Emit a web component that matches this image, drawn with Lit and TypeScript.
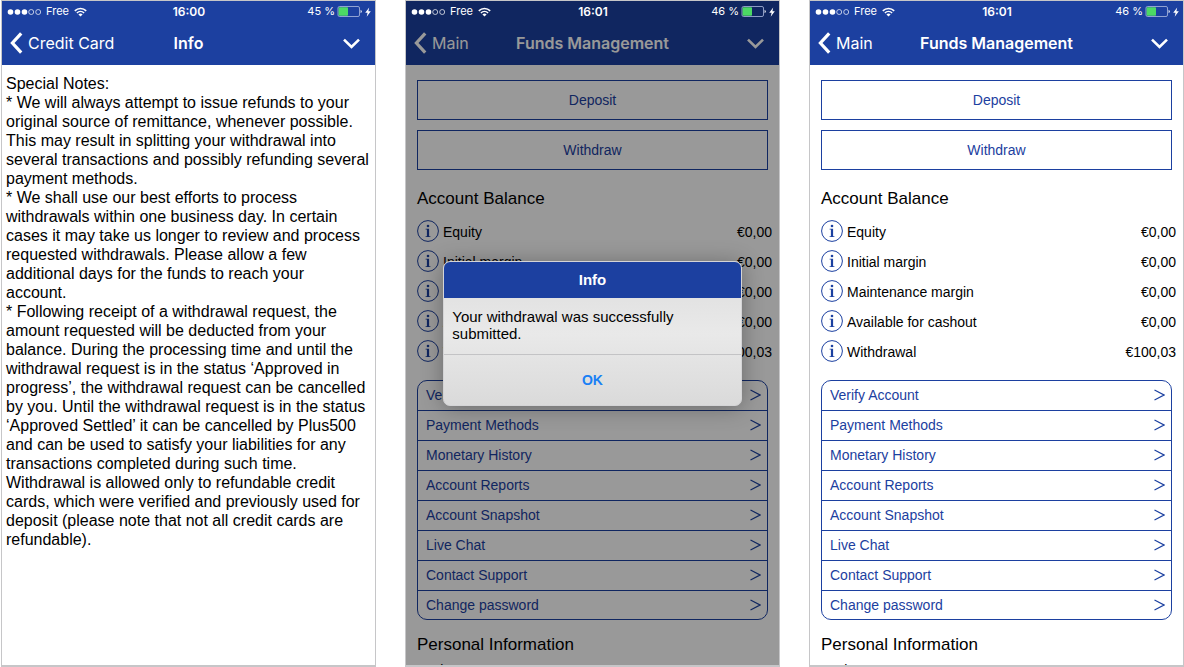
import { LitElement, html, css, nothing } from "lit";
import { customElement, property, state } from "lit/decorators.js";

/** iOS-style phone frame: status bar, navigation bar, content and an optional dialog layer. */
@customElement("phone-frame")
class PhoneFrame extends LitElement {
  @property() time = "";
  @property() battery = "";
  @property() back = "";
  @property() heading = "";
  @property({ type: Boolean }) dimmed = false;

  static styles = css`
    :host {
      position: relative;
      display: flex;
      flex-direction: column;
      min-width: 0;
      min-height: 0;
      box-sizing: border-box;
      border: 1px solid #c6c6c8;
      border-bottom-width: 2px;
      background: #fff;
      overflow: hidden;
    }
    * {
      box-sizing: border-box;
    }
    .top {
      flex: none;
      background: #1c40a0;
      color: #fff;
      font-family: Inter, "Liberation Sans", sans-serif;
    }
    .status {
      position: relative;
      z-index: 2;
      display: grid;
      grid-template-columns: 1fr auto 1fr;
      align-items: center;
      height: 21px;
      padding: 0 4px 0 5px;
      font-size: 11px;
      line-height: 21px;
    }
    .side {
      display: flex;
      align-items: center;
      gap: 5px;
    }
    .end {
      justify-content: flex-end;
      gap: 2px;
    }
    .clock {
      font-size: 12px;
      font-weight: 600;
    }
    .nav {
      display: grid;
      grid-template-columns: 1fr auto 1fr;
      align-items: center;
      height: 43px;
      padding: 0 7px 1px;
    }
    .nav button {
      display: flex;
      align-items: center;
      gap: 5px;
      padding: 0;
      border: 0;
      background: none;
      color: inherit;
      font: 400 16px/24px Inter, "Liberation Sans", sans-serif;
      cursor: pointer;
    }
    .nav .more {
      justify-self: end;
      padding: 0 8px;
    }
    h1 {
      margin: 0;
      font-size: 16px;
      line-height: 24px;
      font-weight: 600;
    }
    .content {
      flex: 1;
      min-height: 0;
      overflow: hidden;
    }
    .overlay {
      position: absolute;
      inset: 0;
      z-index: 1;
      display: flex;
      align-items: center;
      justify-content: center;
      background: rgba(0, 0, 0, 0.4);
    }
  `;

  render() {
    return html`
      <header class="top">
        <div class="status">
          <div class="side">
            <svg width="34" height="8" viewBox="0 0 34 8" aria-hidden="true">
              <g fill="#fff">
                <circle cx="3.5" cy="4" r="2.8" /><circle cx="10.5" cy="4" r="2.8" /><circle cx="17.5" cy="4" r="2.8" />
              </g>
              <g fill="none" stroke="#fff" stroke-width="0.7">
                <circle cx="24.2" cy="4" r="2.5" /><circle cx="31.2" cy="4" r="2.5" />
              </g>
            </svg>
            <span>Free</span>
            <svg width="13" height="10" viewBox="0 0 13 10" aria-hidden="true">
              <g fill="none" stroke="#fff" stroke-width="1.6">
                <path d="M0.8 3.8 A8.2 8.2 0 0 1 12.2 3.8" />
                <path d="M2.9 6 A5.2 5.2 0 0 1 10.1 6" />
              </g>
              <path d="M6.5 9.6 L4.4 7.5 A3 3 0 0 1 8.6 7.5 Z" fill="#fff" />
            </svg>
          </div>
          <span class="clock">${this.time}</span>
          <div class="side end">
            <span>${this.battery} %</span>
            <svg width="26" height="11" viewBox="0 0 26 11" aria-hidden="true">
              <rect x="1" y="0.5" width="21.5" height="10" rx="1.5" fill="none" stroke="#aebbe0" stroke-width="0.8" />
              <rect x="1.6" y="1.2" width="9.4" height="8.6" rx="0.8" fill="#4cd964" />
              <path d="M23.6 3.7 A2 2 0 0 1 23.6 7.3 Z" fill="#fff" />
            </svg>
            <svg width="6" height="10" viewBox="0 0 6 10" aria-hidden="true">
              <path d="M4.2 0.5 L0.2 5.8 H2.6 L1.7 9.8 L5.8 4.3 H3.4 Z" fill="#fff" />
            </svg>
          </div>
        </div>
        <nav class="nav">
          <button type="button">
            <svg width="14" height="22" viewBox="0 0 14 22" aria-hidden="true">
              <path d="M12.2 1.4 L3.4 11 L12.2 20.6" fill="none" stroke="currentColor" stroke-width="3.2" />
            </svg>
            <span>${this.back}</span>
          </button>
          <h1>${this.heading}</h1>
          <button class="more" type="button" aria-label="More">
            <svg width="17" height="11" viewBox="0 0 17 11" aria-hidden="true">
              <path d="M1 1.6 L8.5 9 L16 1.6" fill="none" stroke="currentColor" stroke-width="2.6" />
            </svg>
          </button>
        </nav>
      </header>
      <main class="content"><slot></slot></main>
      ${this.dimmed ? html`<div class="overlay"><slot name="dialog"></slot></div>` : nothing}
    `;
  }
}

const balances = [
  ["Equity", "€0,00"],
  ["Initial margin", "€0,00"],
  ["Maintenance margin", "€0,00"],
  ["Available for cashout", "€0,00"],
  ["Withdrawal", "€100,03"],
];

const links = [
  "Verify Account",
  "Payment Methods",
  "Monetary History",
  "Account Reports",
  "Account Snapshot",
  "Live Chat",
  "Contact Support",
  "Change password",
];

@customElement("funds-page")
class FundsPage extends LitElement {
  static styles = css`
    :host {
      display: block;
      padding: 15px 11px 0;
      color: #000;
      font: 14px/20px "Liberation Sans", Arial, sans-serif;
    }
    * {
      box-sizing: border-box;
    }
    .actions {
      display: grid;
      gap: 10px;
    }
    .action {
      height: 40px;
      border: 1px solid #1c40a0;
      background: none;
      color: #1c40a0;
      font: inherit;
      cursor: pointer;
    }
    h2 {
      margin: 0;
      font-size: 17px;
      line-height: 20px;
      font-weight: 400;
    }
    .balances {
      margin: 19px 0 0;
    }
    .rows {
      margin: 7px -4px 14px 0;
    }
    .row {
      display: flex;
      align-items: center;
      height: 30px;
    }
    .info {
      display: flex;
      margin-right: 4px;
      padding: 0;
      border: 0;
      background: none;
      cursor: pointer;
    }
    dt,
    dd {
      margin: 0;
      padding-top: 2px;
    }
    dt {
      flex: 1;
    }
    .menu {
      margin: 0 0 15px;
      padding: 0;
      list-style: none;
      border: 1px solid #1c40a0;
      border-radius: 10px;
    }
    .menu li {
      height: 30px;
      border-bottom: 1px solid #1c40a0;
    }
    .menu li:last-child {
      height: 28px;
      border-bottom: 0;
    }
    .menu a {
      display: flex;
      align-items: center;
      justify-content: space-between;
      height: 100%;
      padding: 0 6px 1px 8px;
      color: #1c40a0;
      text-decoration: none;
    }
    .name {
      margin: 0;
      padding-top: 5px;
    }
  `;

  render() {
    return html`
      <div class="actions">
        <button class="action" type="button">Deposit</button>
        <button class="action" type="button">Withdraw</button>
      </div>
      <h2 class="balances">Account Balance</h2>
      <dl class="rows">
        ${balances.map(
          ([label, amount]) => html`
            <div class="row">
              <button class="info" type="button" aria-label="About ${label}">
                <svg width="22" height="22" viewBox="0 0 22 22" aria-hidden="true">
                  <circle cx="11" cy="11" r="10.4" fill="none" stroke="#1c40a0" stroke-width="1" />
                  <circle cx="11" cy="6" r="1.3" fill="#1c40a0" />
                  <path d="M8.6 8.8 H12.1 V16.2 H13.4 V17 H8.6 V16.2 H9.9 V9.6 H8.6 Z" fill="#1c40a0" />
                </svg>
              </button>
              <dt>${label}</dt>
              <dd>${amount}</dd>
            </div>
          `
        )}
      </dl>
      <ul class="menu">
        ${links.map(
          (label) => html`
            <li>
              <a href="#">
                <span>${label}</span>
                <svg width="11" height="12" viewBox="0 0 11 12" aria-hidden="true">
                  <path d="M0.5 1 L10 6 L0.5 11" fill="none" stroke="#1c40a0" stroke-width="1.2" />
                </svg>
              </a>
            </li>
          `
        )}
      </ul>
      <h2>Personal Information</h2>
      <p class="name">Login Name: T</p>
    `;
  }
}

@customElement("info-dialog")
class InfoDialog extends LitElement {
  static styles = css`
    :host {
      width: 80%;
      border-radius: 7px;
      overflow: hidden;
      border: 1px solid #d4d4d6;
      background: linear-gradient(#dcdcdc, #e9e9e9 50%, #dadada);
      box-shadow: 0 2px 22px rgba(0, 0, 0, 0.3);
      box-sizing: border-box;
      color: #000;
      font: 15px/17px "Liberation Sans", Arial, sans-serif;
    }
    h2 {
      margin: 0;
      padding-bottom: 1px;
      background: #1c40a0;
      color: #fff;
      font-size: 15px;
      line-height: 35px;
      text-align: center;
    }
    p {
      margin: 0;
      padding: 10px 8px 12px;
    }
    .ok {
      display: block;
      width: 100%;
      height: 51px;
      padding: 1px 0 0;
      border: 0;
      border-top: 1px solid #c3c3c5;
      background: none;
      color: #1a80f5;
      font: 700 14px/20px "Liberation Sans", Arial, sans-serif;
      cursor: pointer;
    }
  `;

  render() {
    return html`
      <section role="dialog" aria-labelledby="title">
        <h2 id="title">Info</h2>
        <p>Your withdrawal was successfully submitted.</p>
        <button class="ok" type="button" @click=${() => this.dispatchEvent(new Event("dismiss"))}>OK</button>
      </section>
    `;
  }
}

const notes = [
  "Special Notes:",
  "* We will always attempt to issue refunds to your original source of remittance, whenever possible. This may result in splitting your withdrawal into several transactions and possibly refunding several payment methods.",
  "* We shall use our best efforts to process withdrawals within one business day. In certain cases it may take us longer to review and process requested withdrawals. Please allow a few additional days for the funds to reach your\naccount.",
  "* Following receipt of a withdrawal request, the amount requested will be deducted from your balance. During the processing time and until the withdrawal request is in the status ‘Approved in progress’, the withdrawal request can be cancelled by you. Until the withdrawal request is in the status ‘Approved Settled’ it can be cancelled by Plus500 and can be used to satisfy your liabilities for any transactions completed during such time.",
  "Withdrawal is allowed only to refundable credit cards, which were verified and previously used for deposit (please note that not all credit cards are refundable).",
];

@customElement("app-root")
class AppRoot extends LitElement {
  @state() dialogOpen = true;

  static styles = css`
    :host {
      display: grid;
      grid-template-columns: repeat(3, minmax(0, 1fr));
      grid-template-rows: minmax(0, 1fr);
      gap: 29px;
      height: 100vh;
      padding-left: 1px;
      box-sizing: border-box;
      background: #fff;
    }
    .notes {
      padding: 9px 4px 0;
      color: #000;
      font: 16px/19px "Liberation Sans", Arial, sans-serif;
    }
    .notes p {
      margin: 0;
      white-space: pre-line;
    }
  `;

  render() {
    return html`
      <phone-frame time="16:00" battery="45" back="Credit Card" heading="Info">
        <div class="notes">${notes.map((text) => html`<p>${text}</p>`)}</div>
      </phone-frame>
      <phone-frame time="16:01" battery="46" back="Main" heading="Funds Management" ?dimmed=${this.dialogOpen}>
        <funds-page></funds-page>
        <info-dialog slot="dialog" @dismiss=${() => (this.dialogOpen = false)}></info-dialog>
      </phone-frame>
      <phone-frame time="16:01" battery="46" back="Main" heading="Funds Management">
        <funds-page></funds-page>
      </phone-frame>
    `;
  }
}
